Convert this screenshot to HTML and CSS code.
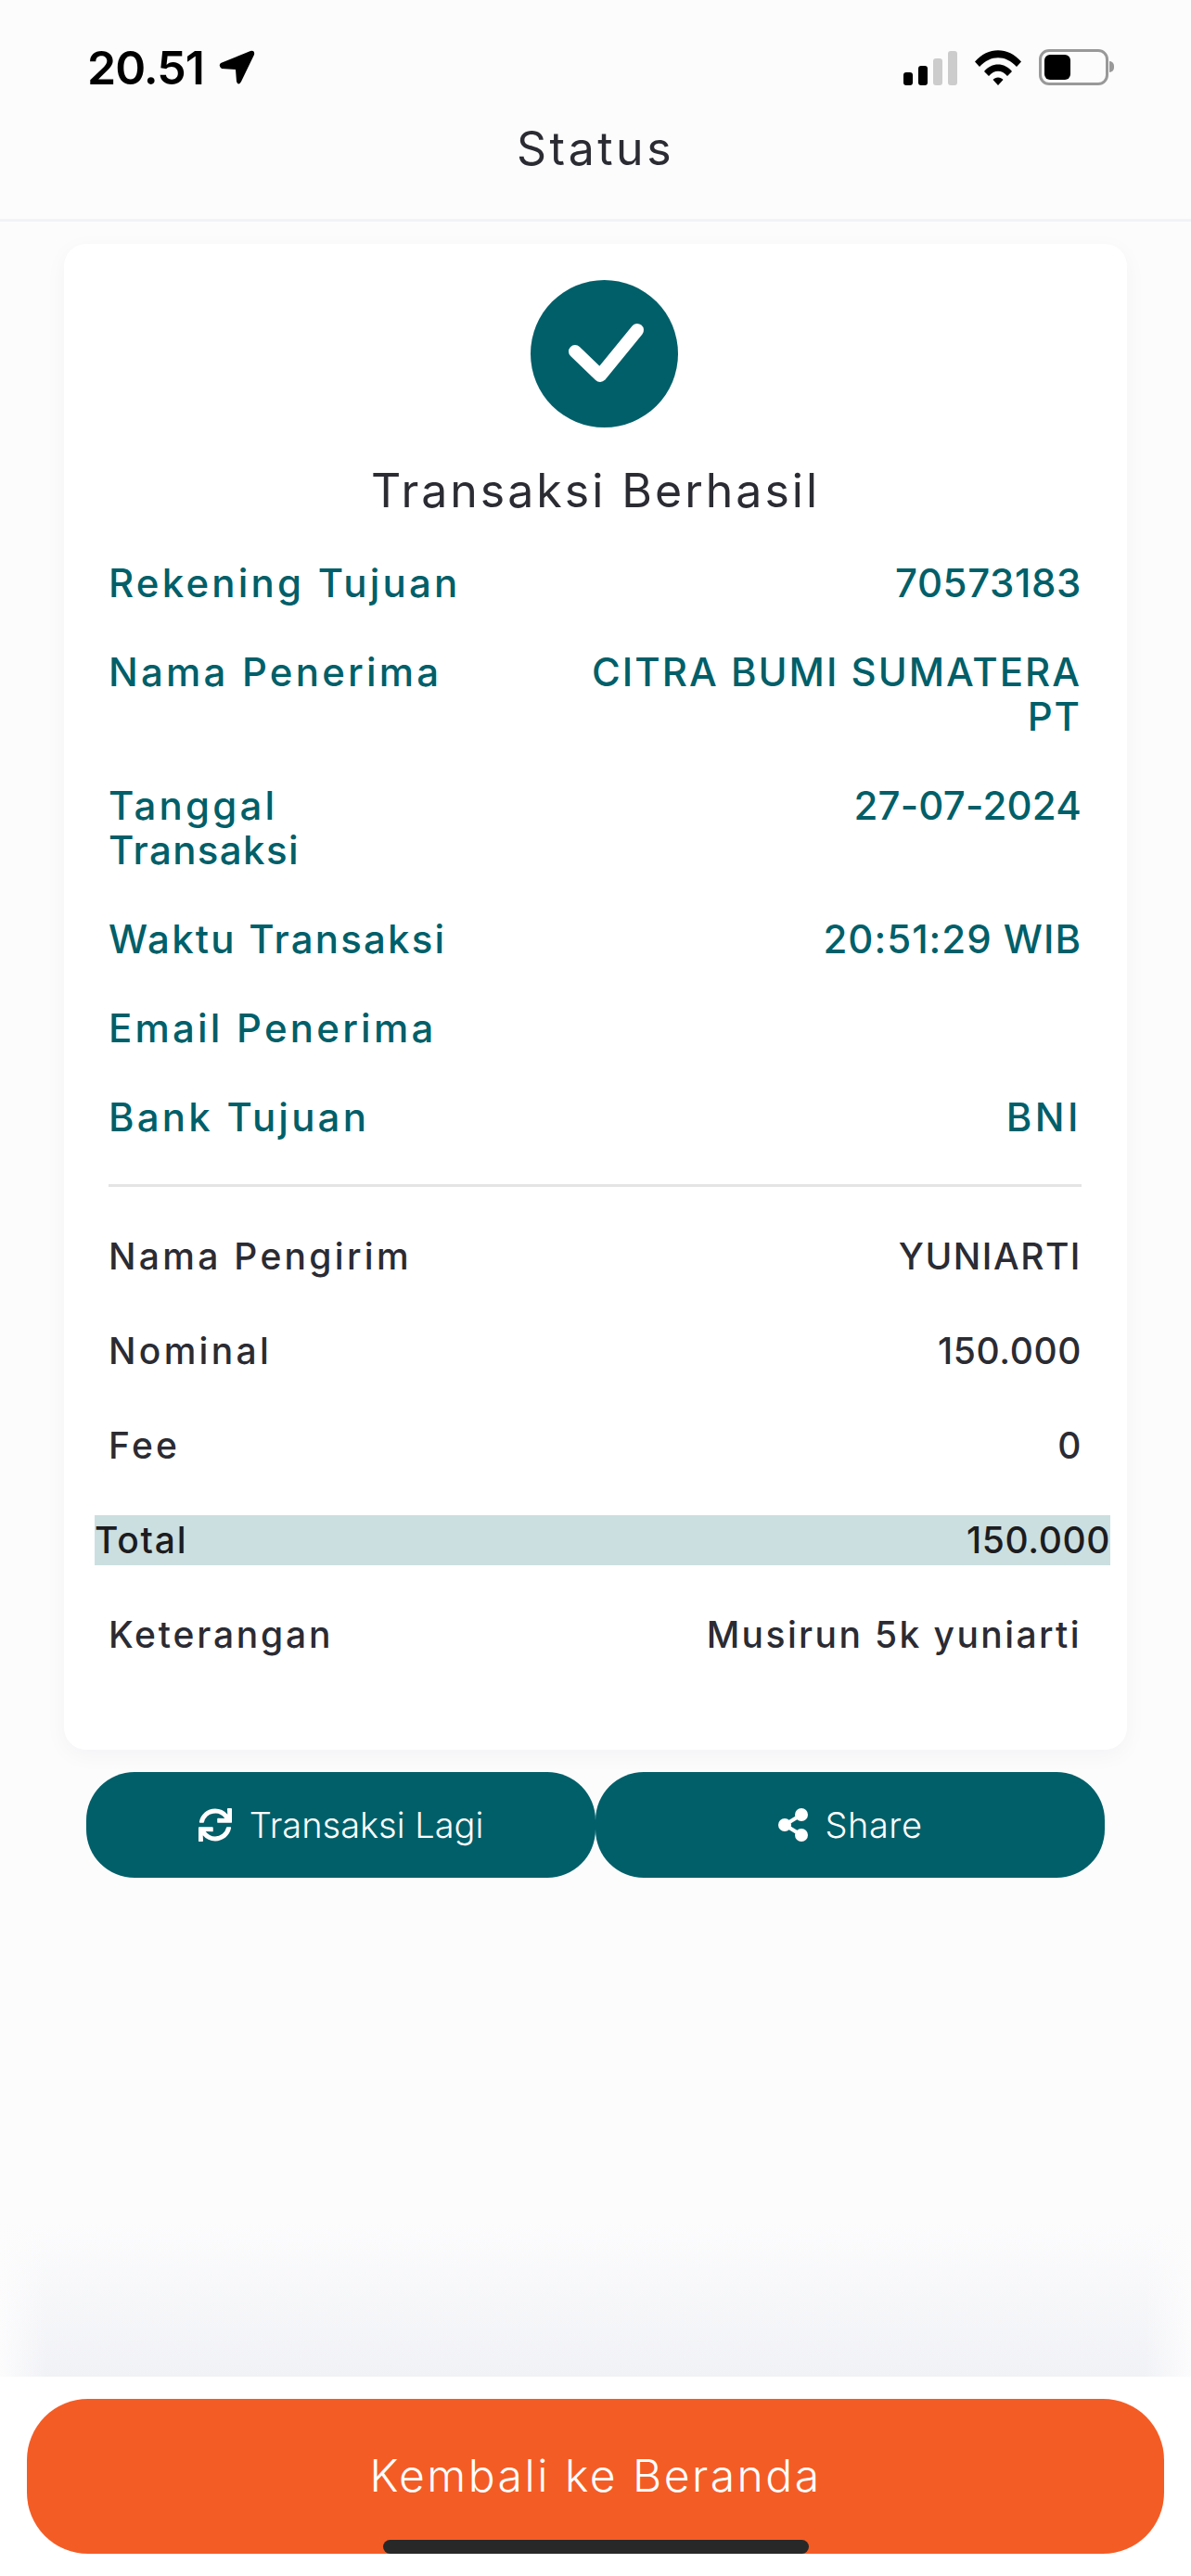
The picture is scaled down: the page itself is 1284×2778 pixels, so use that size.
FILE: index.html
```html
<!DOCTYPE html>
<html>
<head>
<meta charset="utf-8">
<title>Status</title>
<link rel="stylesheet" href="styles.css">
</head>
<body>

<div class="header">
	<div class="statusbar">
		<div class="clock">
			<span>20.51</span>
			<svg class="arrow" viewBox="0 0 39 38"><path d="M2 14 L34 1 Q39 0 38 5 L24 34 Q21 39 19 34 L18 21 L3 20 Q-1 17 2 14 Z"/></svg>
		</div>
		<div class="indicators">
			<svg class="signal" viewBox="0 0 58 37">
				<rect x="0" y="23" width="10" height="14" rx="3"/>
				<rect x="16" y="16" width="10" height="21" rx="3"/>
				<rect x="32" y="8" width="10" height="29" rx="3" fill="#ccc"/>
				<rect x="48" y="0" width="10" height="37" rx="3" fill="#ccc"/>
			</svg>
			<svg class="wifi" viewBox="0 0 50 38">
				<path d="M0 12.500 C14 -4 36 -4 50 12.500 L45 18 C33 5 17 5 5 18 Z"/>
				<path d="M10 23 C18 13 32 13 40 23 L35 28 C29 21 21 21 15 28 Z"/>
				<path d="M19.500 32 C22 28.500 28 28.500 30.500 32 L25 38 Z"/>
			</svg>
			<div class="battery"><div class="battery-level"></div></div>
		</div>
	</div>
	<div class="page-title">Status</div>
</div>

<div class="main">
	<div class="card">
		<svg class="check" viewBox="0 0 159 159">
			<circle cx="79.500" cy="79.500" r="79.500" fill="#005f69"/>
			<path d="M48 77 L75 103 L115 54" fill="none" stroke="#fff" stroke-width="14" stroke-linecap="round" stroke-linejoin="round"/>
		</svg>
		<div class="card-title">Transaksi Berhasil</div>

		<div class="rows">
			<div class="row teal"><span>Rekening Tujuan</span><span class="val num">70573183</span></div>
			<div class="row teal"><span>Nama Penerima</span><span class="val caps">CITRA BUMI SUMATERA<br>PT</span></div>
			<div class="row teal"><span>Tanggal<br><span class="tighter">Transaksi</span></span><span class="val date">27-07-2024</span></div>
			<div class="row teal"><span class="tight">Waktu Transaksi</span><span class="val time">20:51:29 WIB</span></div>
			<div class="row teal"><span>Email Penerima</span><span class="val"></span></div>
			<div class="row teal"><span>Bank Tujuan</span><span class="val wide">BNI</span></div>
			<div class="divider"></div>
			<div class="row dark"><span>Nama Pengirim</span><span class="val caps">YUNIARTI</span></div>
			<div class="row dark"><span>Nominal</span><span class="val num">150.000</span></div>
			<div class="row dark"><span>Fee</span><span class="val num">0</span></div>
			<div class="row dark total"><span>Total</span><span class="val num">150.000</span></div>
			<div class="row dark"><span class="label-short">Keterangan</span><span class="val note">Musirun 5k yuniarti</span></div>
		</div>
	</div>

	<div class="actions">
		<div class="btn">
			<svg class="btn-icon" viewBox="0 0 512 512"><path d="M440.65 12.57l4 82.77A247.16 247.16 0 0 0 255.83 8C134.73 8 33.91 94.92 12.29 209.82A12 12 0 0 0 24.09 224h49.05a12 12 0 0 0 11.67-9.26 175.91 175.91 0 0 1 317-56.94l-101.46-4.86a12 12 0 0 0-12.57 12v47.41a12 12 0 0 0 12 12H500a12 12 0 0 0 12-12V12a12 12 0 0 0-12-12h-47.37a12 12 0 0 0-11.98 12.57zM255.83 432a175.61 175.61 0 0 1-146-77.8l101.8 4.87a12 12 0 0 0 12.57-12v-47.4a12 12 0 0 0-12-12H12a12 12 0 0 0-12 12V500a12 12 0 0 0 12 12h47.35a12 12 0 0 0 12-12.6l-4.15-82.57A247.17 247.17 0 0 0 255.83 504c121.11 0 221.93-86.92 243.55-201.82a12 12 0 0 0-11.8-14.18h-49.05a12 12 0 0 0-11.67 9.26A175.86 175.86 0 0 1 255.83 432z"/></svg>
			<span>Transaksi Lagi</span>
		</div>
		<div class="btn">
			<svg class="btn-icon share" viewBox="0 0 32 36">
				<circle cx="7" cy="18" r="7"/>
				<circle cx="25" cy="7" r="7"/>
				<circle cx="25" cy="29" r="7"/>
				<path d="M7 18 L25 7 M7 18 L25 29" stroke="#fff" stroke-width="4"/>
			</svg>
			<span class="btn-share">Share</span>
		</div>
	</div>
</div>

<div class="footer">
	<div class="home-btn">Kembali ke Beranda</div>
	<div class="home-indicator"></div>
</div>

</body>
</html>
```

FILE: styles.css
```css
* {margin:0; padding:0; box-sizing:border-box;}

html, body {height:100%;}
body {width:1284px; height:2778px; display:flex; flex-direction:column; background:#fcfcfd; font-family:Inter, "Liberation Sans", sans-serif; color:#2b2b33; overflow:hidden;}

.header {height:239px; border-bottom:3px solid #f1f3f6; flex-shrink:0;}

.statusbar {display:flex; justify-content:space-between; padding:53px 89px 0 94px; height:92px;}
.clock {display:flex; align-items:center; gap:16px; height:39px; font-size:50px; font-weight:600; color:#000; letter-spacing:-1px;}
.arrow {width:39px; height:38px;}
.indicators {display:flex; align-items:center; gap:19px; height:39px;}
.signal {width:58px; height:37px; margin-top:1px;}
.wifi {width:50px; height:38px;}
.battery {width:75px; height:39px; border:3px solid #999; border-radius:11px; padding:3px; position:relative;}
.battery-level {width:28px; height:100%; background:#000; border-radius:6px;}
.battery:after {content:''; position:absolute; right:-9px; top:10px; width:5px; height:12px; background:#999; border-radius:0 6px 6px 0;}

.page-title {text-align:center; font-size:50px; line-height:60px; margin-top:38px; letter-spacing:3.500px;}

.main {flex:1; padding:24px 69px 0; background:linear-gradient(to right, #fcfcfd, rgba(252,252,253,0) 50px, rgba(252,252,253,0) calc(100% - 50px), #fcfcfd) bottom / 100% 165px no-repeat, linear-gradient(#fcfcfd, #f1f2f6) bottom / 100% 165px no-repeat;}

.card {height:1624px; background:#fff; border-radius:24px; box-shadow:0 6px 24px rgba(20,30,50,.04); padding-top:39px; display:flex; flex-direction:column; align-items:center;}
.check {width:159px; height:159px; margin-left:19px; flex-shrink:0;}
.card-title {font-size:50px; line-height:60px; margin-top:38px; margin-bottom:46px; letter-spacing:3px;}

.rows {width:100%; padding:0 49px 0 48px;}
.row {display:flex; justify-content:space-between;}
.row .val {text-align:right;}
.teal {color:#005f69; font-size:42px; line-height:48px; font-weight:500; letter-spacing:3.200px; margin-bottom:48px;}
.dark {font-size:39px; line-height:54px; font-weight:500; letter-spacing:3.300px; margin-bottom:48px;}
.row .caps {letter-spacing:2px;}
.row .num {letter-spacing:.6px;}
.row .date {letter-spacing:.2px;}
.row .time {letter-spacing:1px;}
.row .wide {letter-spacing:3.500px;}
.row .note {letter-spacing:2.400px;}
.row .label-short {letter-spacing:2.800px;}
.row .tight {letter-spacing:2.200px;}
.row .tighter {letter-spacing:1.400px;}
.dark .caps {letter-spacing:1.500px;}
.divider {height:3px; background:#e4e4e4; margin-top:3px; margin-bottom:48px;}
.total {background:#cbdfe0; margin-left:-15px; margin-right:-31px; color:#1c1c20; letter-spacing:1.800px;}

.actions {display:flex; padding:0 24px; margin-top:24px;}
.btn {flex:1; height:114px; border-radius:52px; background:#005f69; color:#fff; display:flex; align-items:center; justify-content:center; gap:19px; font-size:38px; font-weight:300;}
.btn-share {letter-spacing:.5px;}
.btn-icon {width:36px; height:36px; fill:#fff;}
.share {width:32px;}

.footer {height:215px; background:#fff; padding:24px 29px; position:relative; flex-shrink:0;}
.home-btn {height:167px; border-radius:66px; background:#f45c25; color:#fff; display:flex; align-items:center; justify-content:center; padding-bottom:3px; font-size:48px; font-weight:300; letter-spacing:2.500px;}
.home-indicator {position:absolute; left:413px; top:176px; width:459px; height:15px; background:#282828; border-radius:8px;}
```
